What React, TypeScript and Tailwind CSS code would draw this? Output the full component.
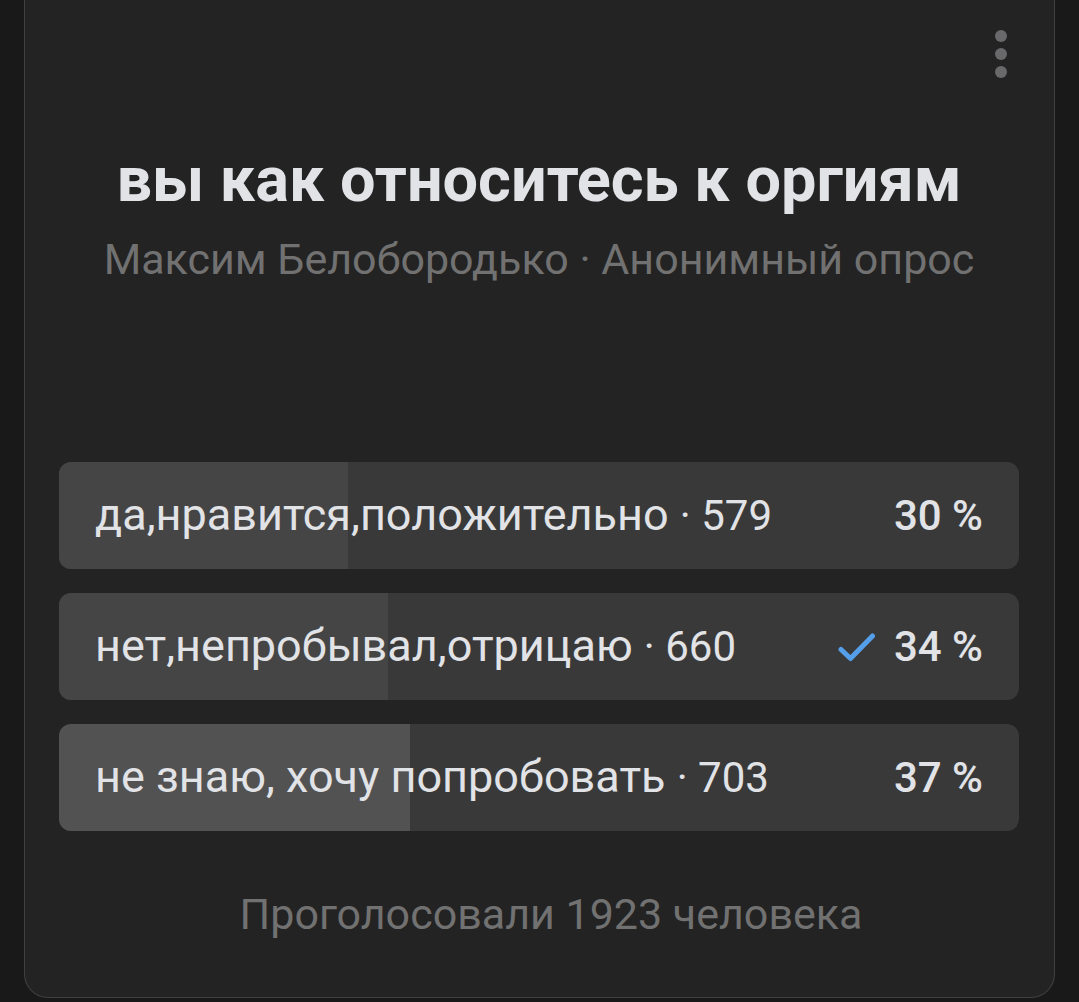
import { useId } from "react";

const options = [
  { text: "да,нравится,положительно", votes: 579, percent: 30, fill: "bg-[#454545]", voted: false },
  { text: "нет,непробывал,отрицаю", votes: 660, percent: 34, fill: "bg-[#454545]", voted: true },
  { text: "не знаю, хочу попробовать", votes: 703, percent: 37, fill: "bg-[#525252]", voted: false },
];

const totalVoters = 1923;

const CheckIcon = () => (
  <svg width="38" height="30" viewBox="0 0 38 30" fill="none" aria-hidden="true">
    <path d="M3 17.5L12.5 26.5L34.5 4" stroke="#559fea" strokeWidth="5" strokeLinecap="round" strokeLinejoin="round" />
  </svg>
);

const MoreIcon = () => (
  <svg width="12" height="50" viewBox="0 0 12 50" fill="#69696b" aria-hidden="true">
    <circle cx="6" cy="7" r="6" />
    <circle cx="6" cy="25" r="6" />
    <circle cx="6" cy="43" r="6" />
  </svg>
);

const App = () => {
  const titleId = useId();

  return (
    <main className="min-h-screen bg-[#191919] px-6 pb-1 font-['Roboto',sans-serif]">
      <section
        aria-labelledby={titleId}
        className="rounded-b-3xl border border-t-0 border-[#404040] bg-[#232323] pr-[35px] pb-14 pl-[34px]"
      >
        <div className="flex h-[108px] items-center justify-end pr-2">
          <button type="button" aria-label="Меню" className="p-1">
            <MoreIcon />
          </button>
        </div>

        <header className="mt-9 text-center">
          <h1 id={titleId} className="text-[63px] leading-[72px] font-bold text-[#e1e3e6]">
            вы как относитесь к оргиям
          </h1>
          <p className="mt-4 text-[43px] leading-[54px] text-[#717171]">
            Максим Белобородько · Анонимный опрос
          </p>
        </header>

        <div className="mt-44 flex flex-col gap-6">
          {options.map((option) => (
            <button
              key={option.text}
              type="button"
              className="relative flex h-[107px] w-full items-center overflow-hidden rounded-xl bg-[#393939] px-9 text-left text-[#e1e3e6]"
            >
              <span
                className={`absolute inset-y-0 left-0 ${option.fill}`}
                style={{ width: `${(option.votes / totalVoters) * 100}%` }}
              />
              <span className="relative flex-1 text-[45px] leading-[54px] whitespace-nowrap">
                {option.text} <span className="text-[42px]">· {option.votes}</span>
              </span>
              <span className="relative flex items-center gap-[18px] text-[42px] leading-[54px] font-medium">
                {option.voted && <CheckIcon />}
                {option.percent} %
              </span>
            </button>
          ))}
        </div>

        <p className="mt-14 pl-6 text-center text-[43px] leading-[54px] text-[#717171]">
          Проголосовали {totalVoters} человека
        </p>
      </section>
    </main>
  );
};

export default App;
